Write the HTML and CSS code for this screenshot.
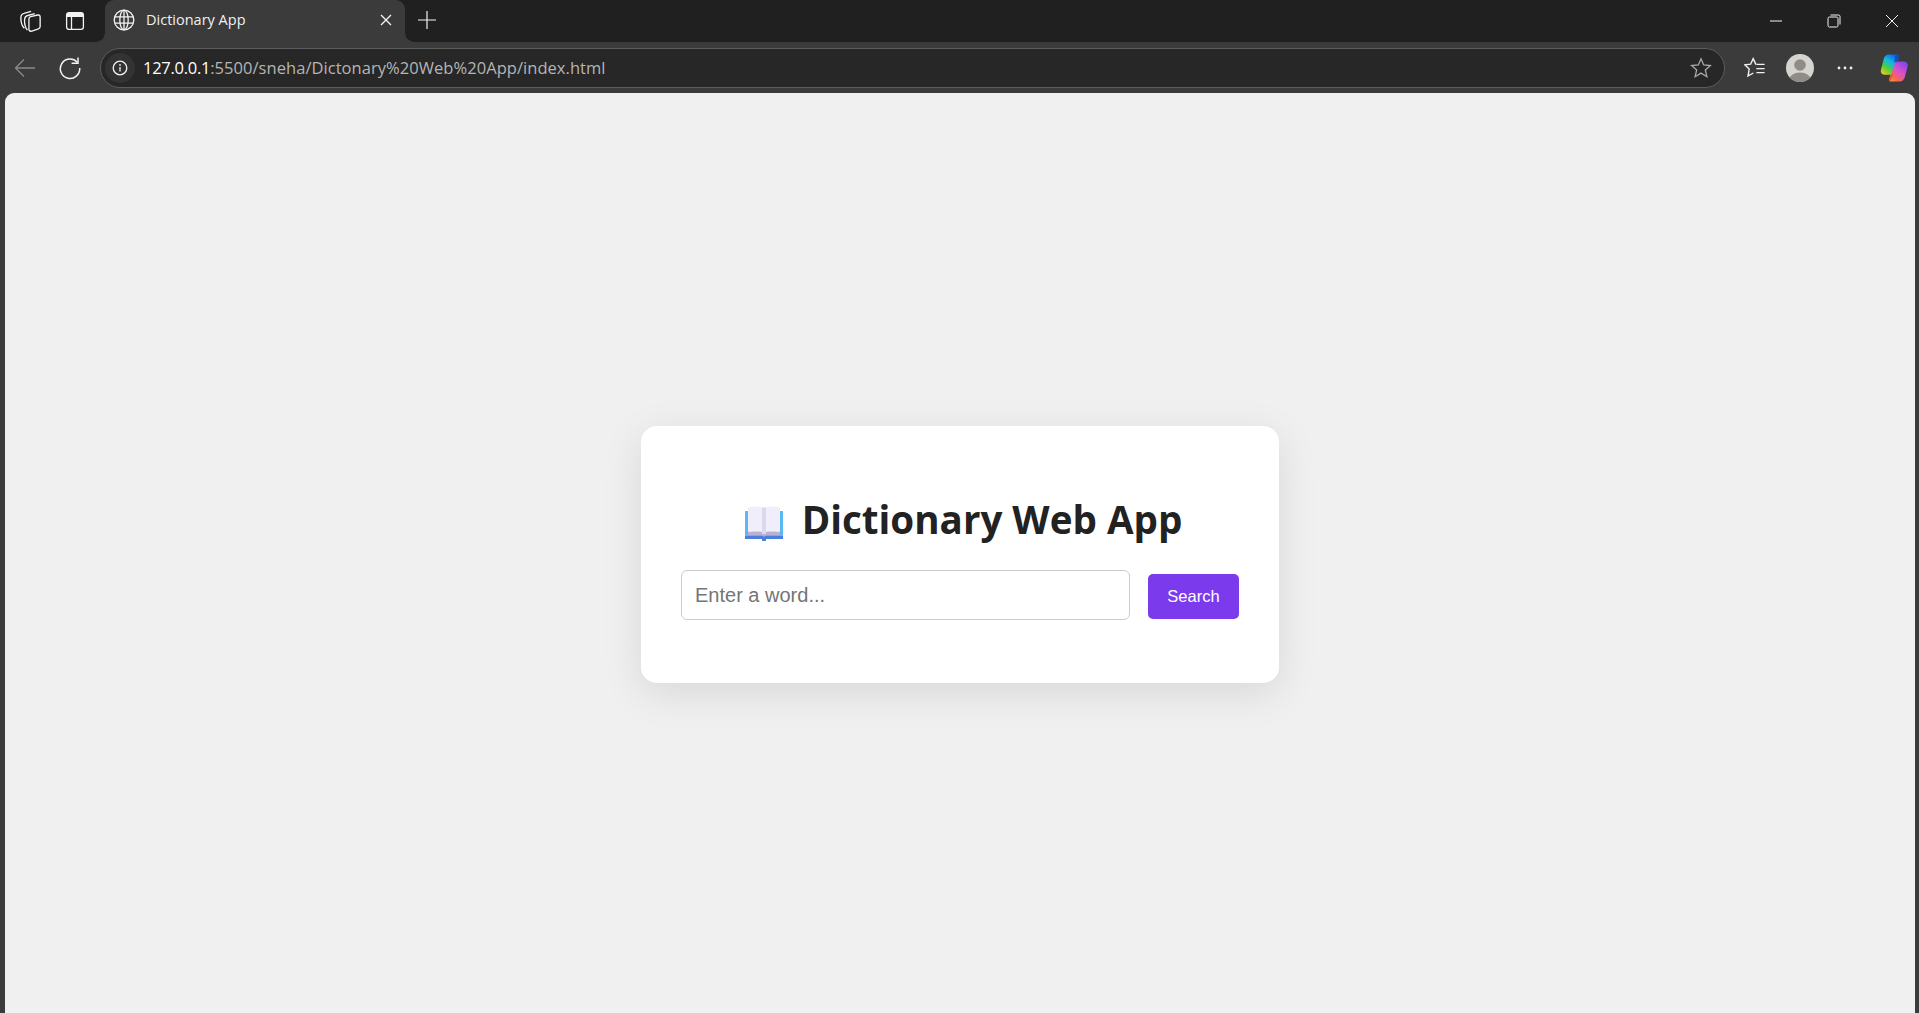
FILE: index.html
```html
<!DOCTYPE html>
<html lang="en">
<head>
  <meta charset="UTF-8" />
  <title>Dictionary App</title>
  <link rel="stylesheet" href="styles.css">
</head>
<body>
  <!-- ----------  TAB STRIP  ---------- -->
  <header class="tabstrip">
    <div class="strip-tools">
      <svg class="ico ico-wide" viewBox="4 3.5 17 18" width="21" height="22"><path d="M7.5 18.5 C5.5 16.5 4.6 13 4.6 10 C4.6 8 5.4 6.6 7.2 6.2 L13 4.6"/><path d="M10 20 C8.4 18 7.6 15 7.6 12 C7.6 9.6 8.6 8.4 10.2 8 L16 6.4"/><path d="M11.2 10.8 C11.2 9.8 11.8 9.2 12.6 9 L18.4 7.6 C19.6 7.4 20.4 8 20.4 9.2 V17 C20.4 18 19.9 18.6 19 18.9 L13.6 20.8 C12.2 21.2 11.2 20.4 11.2 19 Z"/></svg>
      <svg class="ico ico-side" viewBox="0 0 24 24" width="24" height="24"><rect x="3.6" y="3.6" width="16.8" height="16.8" rx="2.4"/><path class="fill" d="M6 3.6 H18 A2.4 2.4 0 0 1 20.4 6 V8 H3.6 V6 A2.4 2.4 0 0 1 6 3.6 Z"/><path d="M8.5 8 V20"/></svg>
    </div>
    <div class="tab">
      <svg class="ico" viewBox="0 0 24 24" width="24" height="24"><circle cx="12" cy="12" r="9.8"/><ellipse cx="12" cy="12" rx="4.2" ry="9.8"/><path d="M12 2.2 V21.8 M3 8.8 H21 M3 15.2 H21"/></svg>
      <span class="tab-title">Dictionary App</span>
      <svg class="ico tab-close" viewBox="0 0 12 12" width="12" height="12"><path d="M1 1 L11 11 M11 1 L1 11"/></svg>
    </div>
    <svg class="ico new-tab" viewBox="0 0 20 20" width="20" height="20"><path d="M10 1 V19 M1 10 H19"/></svg>
    <div class="window-btns">
      <svg class="ico" viewBox="0 0 14 14" width="14" height="14"><path d="M1 7 H13"/></svg>
      <svg class="ico" viewBox="0 0 14 14" width="14" height="14"><rect x="1" y="3" width="10" height="10" rx="1.5"/><path d="M3.5 1 H11.5 A1.5 1.5 0 0 1 13 2.5 V10.5"/></svg>
      <svg class="ico" viewBox="0 0 14 14" width="14" height="14"><path d="M1 1 L13 13 M13 1 L1 13"/></svg>
    </div>
  </header>

  <!-- ----------  ADDRESS BAR  ---------- -->
  <nav class="toolbar">
    <svg class="ico back" viewBox="0 0 24 24" width="24" height="24"><path d="M2.5 12 H22 M11 3.5 L2.5 12 L11 20.5"/></svg>
    <svg class="ico reload" viewBox="0 0 24 24" width="24" height="24"><path d="M19.2 6.2 A9.7 9.7 0 1 0 21.7 12"/><path d="M13.6 7.3 H20 V1.6"/></svg>
    <div class="omnibox">
      <span class="info-btn">
        <svg class="ico" viewBox="0 0 16 16" width="16" height="16"><circle cx="8" cy="8" r="6.8"/><path d="M8 7 V11.6"/><circle class="dot" cx="8" cy="4.9" r=".9"/></svg>
      </span>
      <span class="url"><b>127.0.0.1</b>:5500/sneha/Dictonary%20Web%20App/index.html</span>
      <svg class="ico star" viewBox="0 0 22 22" width="22" height="22"><path d="M11 1.8 L13.7 8 L20.4 8.6 L15.3 13 L16.9 19.7 L11 16.1 L5.1 19.7 L6.7 13 L1.6 8.6 L8.3 8 Z"/></svg>
    </div>
    <div class="tool-btns">
      <svg class="ico fav" viewBox="0 0 22 22" width="22" height="22"><path d="M12 7.6 L9.2 1.6 L6.6 7.2 L1 7.9 L5.2 12 L4 18.9 L9.4 16"/><path d="M12.4 7.4 H20.6 M12.4 11.6 H20.6 M12.4 15.6 H20.6"/></svg>
      <svg class="avatar" viewBox="0 0 28 28" width="28" height="28"><defs><clipPath id="av"><circle cx="14" cy="14" r="14"/></clipPath></defs><circle cx="14" cy="14" r="14" fill="#d6d4cf"/><g clip-path="url(#av)" fill="#8f8c87"><circle cx="14" cy="11" r="5.8"/><ellipse cx="14" cy="26" rx="11" ry="7.5"/></g></svg>
      <svg class="more" viewBox="0 0 16 4" width="16" height="4"><circle cx="2" cy="2" r="1.4"/><circle cx="8" cy="2" r="1.4"/><circle cx="14" cy="2" r="1.4"/></svg>
      <svg class="copilot" viewBox="0 0 28 28" width="28" height="28">
        <defs>
          <linearGradient id="cpL" x1="0.75" y1="0" x2="0.15" y2="1"><stop offset="0" stop-color="#0f5fe0"/><stop offset=".35" stop-color="#12b4e6"/><stop offset=".68" stop-color="#4fd03a"/><stop offset="1" stop-color="#f7c80f"/></linearGradient>
          <linearGradient id="cpR" x1="0.85" y1="0" x2="0.15" y2="1"><stop offset="0" stop-color="#7a45ee"/><stop offset=".45" stop-color="#d84fd0"/><stop offset=".8" stop-color="#f5645a"/><stop offset="1" stop-color="#f8932a"/></linearGradient>
        </defs>
        <path fill="url(#cpL)" d="M9 .6 H17.2 C18.6 .6 19.6 1.4 19.2 2.6 L13.4 19 C12.8 20.4 11.8 20.8 10.6 20.8 H5.4 C2 20.8 .2 18.6 1 15.4 L3.6 5.4 C4.4 2.4 6 .6 9 .6 Z"/>
        <path fill="url(#cpR)" d="M19 7.4 H23.4 C26.6 7.4 28.2 9.6 27.6 12.4 L25 22.4 C24.2 25.4 22.4 27.4 19.4 27.4 H11 C9.6 27.4 8.6 26.6 9.2 25 L15.2 9 C15.8 7.8 17.2 7.4 19 7.4 Z"/>
        <path fill="#1c3fb0" d="M17 .6 C18.6 .6 19.6 1.4 19.2 2.6 L17 8.4 C16 7.6 14.4 8 14 9.4 L15 3 C15.2 1.6 16 .6 17 .6 Z" opacity=".75"/>
        <path fill="#e2532e" d="M10.2 20.8 H13.2 L10.4 27.2 C9.2 27 8.8 26 9.2 25 Z" opacity=".85"/>
      </svg>
    </div>
  </nav>

  <!-- ----------  PAGE  ---------- -->
  <main class="page">
    <section class="card">
      <h1 class="card-title">
        <svg class="book" viewBox="0 0 40 36" width="40" height="36">
          <path fill="#5cb8f5" d="M1 5 H39 V31 H1 Z"/>
          <path fill="#4a7fe0" d="M1 30 H39 V33 H22 V35 H18 V33 H1 Z"/>
          <path fill="#b8b2d0" d="M4 3 H36 V29 H22 L20 31 L18 29 H4 Z"/>
          <path fill="#f0eefa" d="M5.5 1 C10 .4 15 .4 18 1.4 V26 C15 25.4 10 25.4 5.5 26 C4.7 26 4 25.4 4 24.6 V2.4 C4 1.6 4.7 1 5.5 1 Z"/>
          <path fill="#f0eefa" d="M34.5 1 C30 .4 25 .4 22 1.4 V26 C25 25.4 30 25.4 34.5 26 C35.3 26 36 25.4 36 24.6 V2.4 C36 1.6 35.3 1 34.5 1 Z"/>
          <path fill="#dcd8ee" d="M18 1.4 H22 V28 H18 Z"/>
        </svg>
        <span>Dictionary Web App</span>
      </h1>
      <div class="search-row">
        <input class="word-input" type="text" placeholder="Enter a word...">
        <button class="search-btn">Search</button>
      </div>
    </section>
  </main>
</body>
</html>
```

FILE: styles.css
```css
/* —————— RESET —————— */
*{margin:0;padding:0;box-sizing:border-box;}

html,body{height:100%;}
body{
  display:flex;
  flex-direction:column;
  background:#3b3b3b;
  font-family:"Open Sans","Noto Sans",Arial,sans-serif;
  overflow:hidden;
}

.ico{fill:none;stroke:#f2f2f2;stroke-width:1.3;flex:none;display:block;}
.ico .fill{fill:#f2f2f2;stroke:none;}
.ico .dot{fill:#f2f2f2;stroke:none;}

/* —————— TAB STRIP —————— */
.tabstrip{
  height:42px;
  flex:none;
  display:flex;
  align-items:center;
  background:#202020;
}
.strip-tools{
  display:flex;
  align-items:center;
  gap:22px;
  padding-left:20px;
  width:105px;
}
.ico-wide{stroke-width:1.1;}
.tab{
  position:relative;
  width:300px;
  height:42px;
  display:flex;
  align-items:center;
  padding:0 13px 3px 7px;
  background:#3b3b3b;
  border-radius:9px 9px 0 0;
}
.tab::before,.tab::after{
  content:"";
  position:absolute;
  bottom:0;
  width:9px;
  height:9px;
}
.tab::before{left:-9px;background:radial-gradient(circle at 0 0,#202020 8.5px,#3b3b3b 9px);}
.tab::after{right:-9px;background:radial-gradient(circle at 100% 0,#202020 8.5px,#3b3b3b 9px);}
.tab-title{
  flex:1;
  margin-left:10px;
  font-size:14.5px;
  color:#f0f0f0;
  white-space:nowrap;
}
.tab-close{stroke-width:1.4;}
.new-tab{margin-left:12px;stroke-width:1.2;margin-bottom:3px;}
.window-btns{
  margin-left:auto;
  display:flex;
  gap:44px;
  padding-right:20px;
}
.window-btns .ico{stroke-width:1;}

/* —————— ADDRESS BAR —————— */
.toolbar{
  height:51px;
  flex:none;
  display:flex;
  align-items:center;
  padding:0 0 0 13px;
}
.back{stroke:#8a8a8a;}
.reload{margin-left:21px;stroke-width:1.5;}
.omnibox{
  flex:none;
  width:1625px;
  height:40px;
  margin-left:18px;
  display:flex;
  align-items:center;
  padding-left:4px;
  padding-right:12px;
  background:#272727;
  border:1px solid #5c5c5c;
  border-radius:20px;
}
.info-btn{
  width:30px;
  height:30px;
  display:flex;
  align-items:center;
  justify-content:center;
  background:#333;
  border-radius:50%;
}
.url{
  flex:1;
  margin-left:8px;
  font-size:16.5px;
  letter-spacing:0.05px;
  color:#b5b5b5;
  white-space:nowrap;
}
.url b{font-weight:400;color:#fff;letter-spacing:-0.27px;}
.star{stroke:#a8a8a8;}
.tool-btns{
  display:flex;
  align-items:center;
  margin-left:19px;
}
.fav{stroke-width:1.4;}
.avatar{margin-left:20px;display:block;}
.more{margin-left:23px;fill:#eee;display:block;}
.copilot{margin-left:27px;display:block;}

/* —————— PAGE —————— */
.page{
  flex:1;
  margin:0 4px 0 5px;
  display:flex;
  align-items:center;
  justify-content:center;
  background:#f0f0f0;
  border-radius:9px 9px 0 0;
}
.card{
  width:638px;
  height:257px;
  margin-top:3px;
  padding:0 40px;
  display:flex;
  flex-direction:column;
  align-items:center;
  justify-content:center;
  background:#fff;
  border-radius:16px;
  box-shadow:0 10px 40px rgba(0,0,0,0.1);
}
.card-title{
  display:flex;
  align-items:center;
  gap:18px;
  padding-left:6px;
  font-size:38.6px;
  font-weight:700;
  line-height:54px;
  color:#222;
  margin-top:3px;
  margin-bottom:26px;
}
.book{display:block;margin-top:10px;}

.search-row{
  width:100%;
  display:flex;
  align-items:center;
  gap:18px;
}
.word-input{
  flex:1;
  height:50px;
  padding:0 13px;
  font-family:"Liberation Sans",Arial,sans-serif;
  font-size:20px;
  border:1px solid #ccc;
  border-radius:6px;
  outline:none;
  margin-top:-2px;
}
.word-input::placeholder{color:#757575;}
.search-btn{
  width:91px;
  height:45px;
  margin-top:1px;
  font-family:"Liberation Sans",Arial,sans-serif;
  font-size:16.5px;
  color:#fff;
  background:#7c3aed;
  border:none;
  border-radius:5px;
}
```
